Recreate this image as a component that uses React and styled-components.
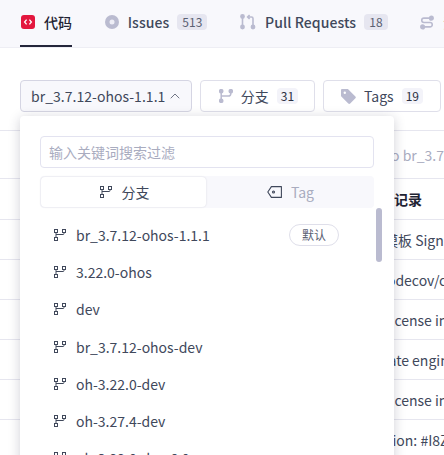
import React from 'react';
import styled, { createGlobalStyle } from 'styled-components';
import { ChevronUp } from 'lucide-react';

const GlobalStyle = createGlobalStyle`
  html, body {
    margin: 0;
    padding: 0;
    background: #fff;
    overflow: hidden;
  }
  body {
    font-family: "Noto Sans CJK SC", "Noto Sans", sans-serif;
    color: #40485b;
  }
  * { box-sizing: border-box; }
`;

const Page = styled.div`
  position: relative;
  width: 444px;
  height: 455px;
  overflow: hidden;
`;

const NavBar = styled.nav`
  height: 48px;
  background: #f8f8fc;
  border-bottom: 1px solid #eeeef4;
  padding-left: 20px;
  display: flex;
  gap: 32.5px;
  white-space: nowrap;
  overflow: hidden;
`;

const NavTab = styled.div`
  height: 47px;
  display: flex;
  align-items: center;
  gap: 9px;
  padding-left: ${(p) => (p.$active ? 1 : 0)}px;
  padding-bottom: 1px;
  font-size: 14px;
  font-weight: 500;
  letter-spacing: 0.08px;
  color: ${(p) => (p.$active ? '#1f2333' : '#40485b')};
  border-bottom: 2px solid ${(p) => (p.$active ? '#24263a' : 'transparent')};
  flex-shrink: 0;
`;

const Count = styled.span`
  background: #e6e6f0;
  color: #5a6072;
  border-radius: 4px;
  font-size: 12px;
  font-weight: 400;
  line-height: 16px;
  padding: 0 5px;
  margin-left: -1px;
`;

const Toolbar = styled.div`
  display: flex;
  gap: 8px;
  padding: 32px 0 0 20px;
  white-space: nowrap;
`;

const ToolButton = styled.div`
  height: 32px;
  width: ${(p) => p.$w}px;
  flex-shrink: 0;
  display: flex;
  align-items: center;
  justify-content: center;
  gap: 8px;
  padding-left: ${(p) => p.$pad || 0}px;
  border: 1px solid #dfdfea;
  border-radius: 4px;
  font-size: 14px;
  color: #40485b;
  background: #fff;
`;

const BranchSelect = styled.div`
  height: 32px;
  width: 172px;
  flex-shrink: 0;
  display: flex;
  align-items: center;
  gap: 2px;
  padding-left: 10px;
  border: 1px solid #d5d5e3;
  border-radius: 4px;
  font-size: 14px;
  letter-spacing: 0.03px;
  color: #40485b;
  background: #f8f8fc;
`;

const SoftCount = styled.span`
  background: #f3f3f9;
  color: #2c3142;
  border-radius: 4px;
  font-size: 12px;
  line-height: 16px;
  padding: 0 4px;
`;

const Table = styled.div`
  margin-top: 18px;
  border-top: 1px solid #e6e6ef;
  white-space: nowrap;
  font-size: 14px;
`;

const TableRow = styled.div`
  padding-left: ${(p) => p.$x}px;
  display: flex;
  align-items: center;
  border-bottom: 1px solid #e6e6ef;
  color: ${(p) => p.$color || '#40485b'};
  font-weight: ${(p) => p.$weight || 400};
  height: ${(p) => p.$h || 40}px;
`;

const Popover = styled.div`
  position: absolute;
  left: 20px;
  top: 116px;
  width: 374px;
  height: 360px;
  background: #fff;
  border-radius: 4px;
  box-shadow: 0 2px 12px rgba(40, 40, 70, 0.22);
  padding: 20px;
`;

const SearchInput = styled.input`
  display: block;
  width: 100%;
  height: 32px;
  border: 1px solid #e3e3f0;
  border-radius: 4px;
  padding: 0 8px;
  font: inherit;
  font-size: 14px;
  outline: none;
  color: #40485b;
  &::placeholder { color: #a9acbf; opacity: 1; }
`;

const TabSwitch = styled.div`
  margin-top: 8px;
  height: 32px;
  display: grid;
  grid-template-columns: 1fr 1fr;
  background: #f8f8fc;
  border-radius: 4px;
`;

const SwitchItem = styled.div`
  display: flex;
  align-items: center;
  justify-content: center;
  gap: ${(p) => (p.$active ? 10 : 9)}px;
  padding-left: ${(p) => (p.$active ? 2 : 0)}px;
  font-size: 14px;
  border-radius: 4px;
  color: ${(p) => (p.$active ? '#40485b' : '#a9acbf')};
  background: ${(p) => (p.$active ? '#fff' : 'transparent')};
  ${(p) => p.$active && 'margin: 1px; box-shadow: 0 0 2px rgba(40, 40, 70, 0.16);'}
`;

const BranchList = styled.ul`
  list-style: none;
  margin: 8px 0 0;
  padding: 0;
`;

const BranchRow = styled.li`
  height: 37.3px;
  display: flex;
  align-items: center;
  gap: 10px;
  padding-left: 14px;
  font-size: 14px;
  color: #40485b;
`;

const DefaultBadge = styled.span`
  margin-left: auto;
  margin-right: 35px;
  width: 50px;
  height: 22px;
  border: 1px solid #dfdfea;
  border-radius: 11px;
  font-size: 12px;
  line-height: 20px;
  text-align: center;
  color: #5a6072;
`;

const Scrollbar = styled.div`
  position: absolute;
  left: 356px;
  top: 92px;
  width: 6px;
  height: 54px;
  background: #babbd0;
  border-radius: 3px;
`;

const BranchIcon = () => (
  <svg width="12" height="12" viewBox="0 0 12 12" fill="none" stroke="#40485b" strokeWidth="1">
    <rect x="0.5" y="0.5" width="3" height="3" />
    <rect x="8.5" y="0.5" width="3" height="3" />
    <rect x="0.5" y="8.5" width="3" height="3" />
    <path d="M2 3.500v5M10 3.500v1a1 1 0 0 1-1 1H2" />
  </svg>
);

const CodeIcon = () => (
  <svg width="14" height="14" viewBox="0 0 14 14">
    <rect width="14" height="14" rx="3" fill="#e3173e" />
    <path d="M5.600 4.600 3.600 7l2 2.400M8.400 4.600l2 2.400-2 2.400" fill="none" stroke="#fff" strokeWidth="1.300" />
  </svg>
);

const IssueIcon = () => (
  <svg width="14" height="14" viewBox="0 0 14 14">
    <circle cx="7" cy="7" r="7" fill="#babbd0" />
    <circle cx="7" cy="7" r="2.500" fill="#eeeef6" />
  </svg>
);

const PullIcon = () => (
  <svg width="16" height="16" viewBox="0 0 16 16" fill="none" stroke="#babbd0" strokeWidth="1.600">
    <circle cx="2.500" cy="2.500" r="1.600" fill="#babbd0" />
    <circle cx="2.500" cy="13" r="1.600" fill="#babbd0" />
    <circle cx="13" cy="13" r="1.600" fill="#babbd0" />
    <path d="M2.500 3v9M13 12V4.500a1.500 1.500 0 0 0-1.500-1.500H8M9.600 1 7.600 3l2 2" />
  </svg>
);

const FlowIcon = () => (
  <svg width="14" height="15" viewBox="0 0 16 16" fill="none" stroke="#babbd0" strokeWidth="1.800">
    <circle cx="13" cy="3" r="2" fill="#babbd0" />
    <circle cx="3" cy="13" r="2" fill="#babbd0" />
    <path d="M11 3H4.500a2.500 2.500 0 0 0 0 5h7a2.500 2.500 0 0 1 0 5H5" />
  </svg>
);

const ForkIcon = () => (
  <svg width="14" height="14" viewBox="0 0 14 14" fill="none" stroke="#babbd0" strokeWidth="1.500">
    <circle cx="2.200" cy="2.200" r="1.600" fill="#babbd0" />
    <circle cx="11.800" cy="2.200" r="1.600" fill="#babbd0" />
    <circle cx="2.200" cy="11.800" r="1.600" fill="#babbd0" />
    <path d="M2.200 3v8M11.800 3v1.400A2.600 2.600 0 0 1 9.200 7H2.200" />
  </svg>
);

const TagFillIcon = () => (
  <svg width="15" height="15" viewBox="0 0 15 15">
    <path d="M0 1.200C0 .5.5 0 1.200 0h5.200c.4 0 .7.1 1 .4l7 7c.6.6.6 1.300 0 1.900l-5.200 5.200c-.6.6-1.300.6-1.900 0l-7-7C.1 7.200 0 6.900 0 6.500Z" fill="#babbd0" />
    <circle cx="3.800" cy="3.800" r="1.200" fill="#fff" />
  </svg>
);

const TagOutlineIcon = () => (
  <svg width="15" height="12" viewBox="0 0 15 12" fill="none" stroke="#40485b" strokeWidth="1.100">
    <path d="M14.400.6H4.400L.8 6l3.600 5.400h10Z" strokeLinejoin="round" />
    <circle cx="6.500" cy="6" r="1" />
  </svg>
);

const branches = [
  'br_3.7.12-ohos-1.1.1',
  '3.22.0-ohos',
  'dev',
  'br_3.7.12-ohos-dev',
  'oh-3.22.0-dev',
  'oh-3.27.4-dev',
  'oh-3.22.0-dev-6.0',
];

const rows = [
  { text: 'to br_3.7', x: 386, h: 48, color: '#a9acbf' },
  { text: '记录', x: 394, h: 41, color: '#1f2333', weight: 700 },
  { text: '模板 Sign', x: 384 },
  { text: 'Codecov/c', x: 378 },
  { text: 'License in', x: 383 },
  { text: 'Update engine', x: 361 },
  { text: 'License in', x: 383 },
  { text: 'Version: #I8Z', x: 365 },
];

export default function App() {
  return (
    <Page>
      <GlobalStyle />
      <NavBar>
        <NavTab $active><CodeIcon />代码</NavTab>
        <NavTab><IssueIcon />Issues<Count>513</Count></NavTab>
        <NavTab><PullIcon />Pull Requests<Count>18</Count></NavTab>
        <NavTab><FlowIcon />流水线</NavTab>
      </NavBar>
      <Toolbar>
        <BranchSelect>br_3.7.12-ohos-1.1.1<ChevronUp size={16} strokeWidth={1.3} color="#5a6072" /></BranchSelect>
        <ToolButton $w={115} $pad={2}><ForkIcon />分支<SoftCount>31</SoftCount></ToolButton>
        <ToolButton $w={118}><TagFillIcon />Tags<SoftCount>19</SoftCount></ToolButton>
      </Toolbar>
      <Table>
        {rows.map((r, i) => (
          <TableRow key={i} $x={r.x} $h={r.h} $color={r.color} $weight={r.weight}>{r.text}</TableRow>
        ))}
      </Table>
      <Popover>
        <SearchInput placeholder="输入关键词搜索过滤" />
        <TabSwitch>
          <SwitchItem $active><BranchIcon />分支</SwitchItem>
          <SwitchItem><TagOutlineIcon />Tag</SwitchItem>
        </TabSwitch>
        <BranchList>
          {branches.map((b, i) => (
            <BranchRow key={b}>
              <BranchIcon />
              {b}
              {i === 0 && <DefaultBadge>默认</DefaultBadge>}
            </BranchRow>
          ))}
        </BranchList>
        <Scrollbar />
      </Popover>
    </Page>
  );
}
